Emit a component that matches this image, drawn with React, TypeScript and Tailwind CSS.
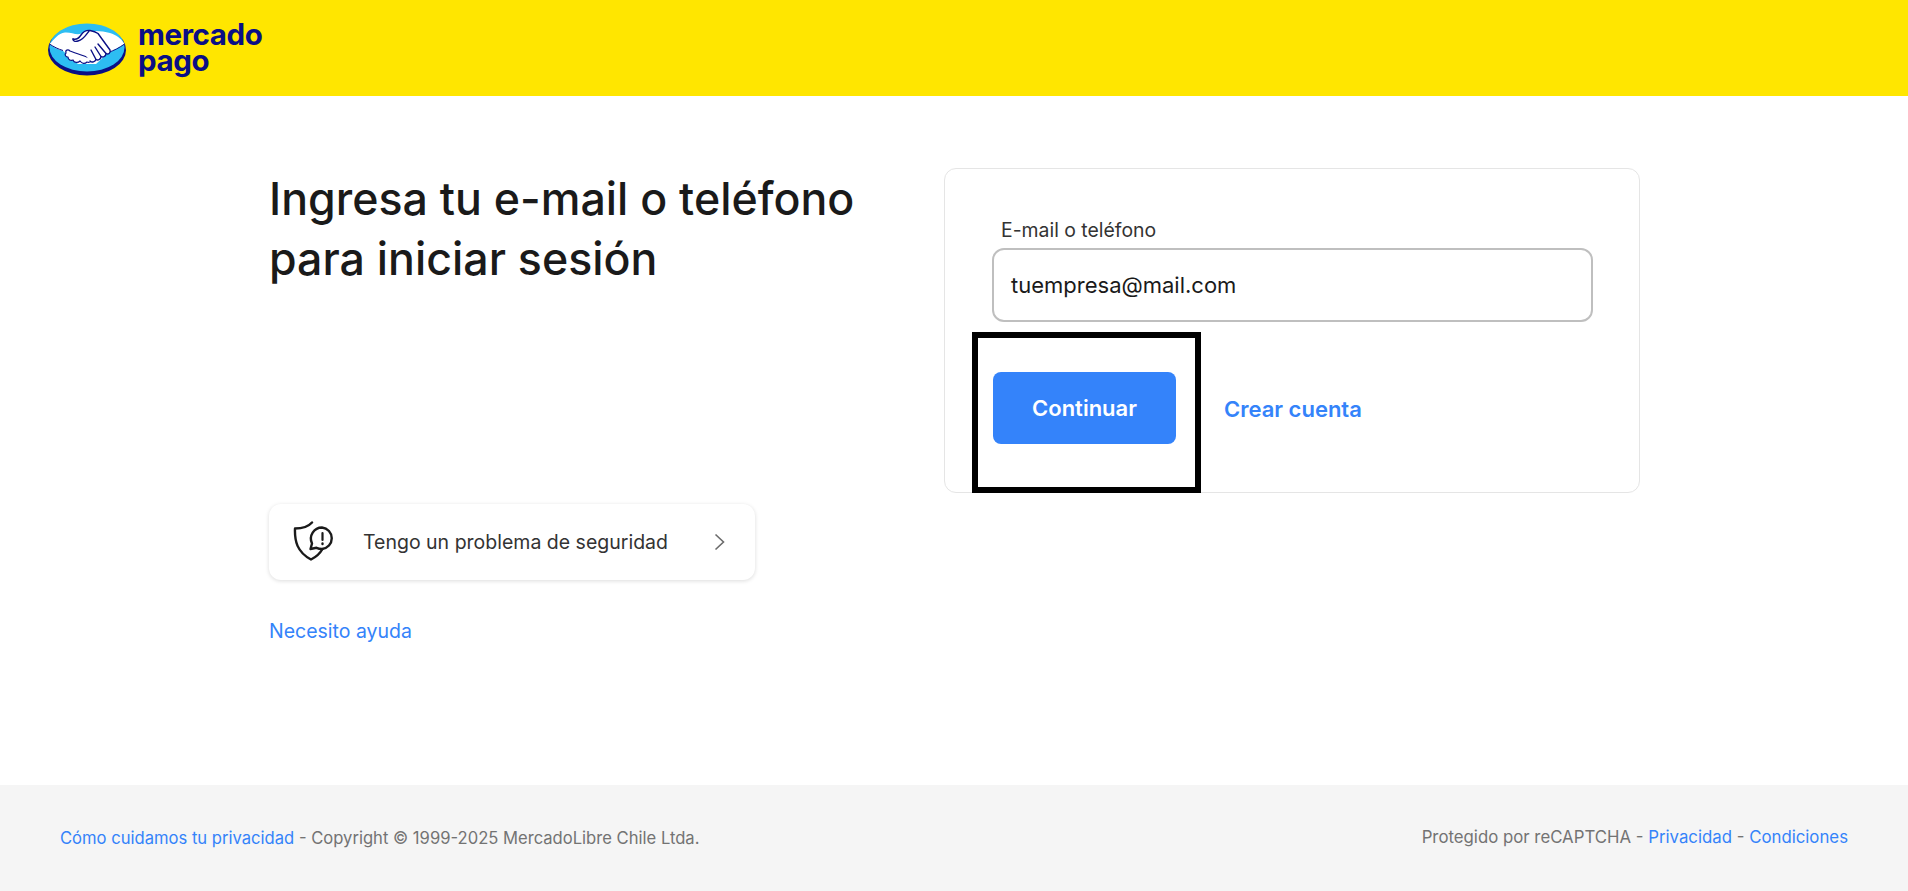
const Logo = () => (
  <div className="flex items-start">
    <svg width="80" height="54" viewBox="0 0 80 54" className="mt-[22px] ml-[48px] shrink-0">
      <ellipse cx="39" cy="28" rx="39" ry="25.5" fill="#0a0f85" />
      <ellipse cx="39" cy="25.5" rx="37.5" ry="24" fill="#2dbdf2" />
      <path d="M1.5 22C6 18 10 11 17 10.5C24 10 28 14 36 11C44 8 54 9 62 11C68 13 73 16 76.5 22C70 26 65 29 60 31L48 42L30 42L15 29C9 27 5 25 1.5 22Z" fill="#fff" />
      <path d="M1.5 22C6 25 10 27 15 28.5M76.5 22C71 26 66 28.5 60 30.5" fill="none" stroke="#0a0f85" strokeWidth="1" />
      <path d="M22 29C20 27 17 28 18 31C16 33 18 35 20 35C20 38 23 39 25 38C26 41 30 41 32 39C34 42 37 42 39 40C42 41 44 39 44 37C39 35 30 32 22 29Z" fill="#fff" stroke="#0a0f85" strokeWidth="1.2" strokeLinejoin="round" />
      <path d="M25 17C28 18 31 16 33 13C35 10 38 8 42 8.5C45 9 48 10 50 11.5L62 28C63 31 60 33 58 31.5C58 34 55 36 53 34.5C53 37 50 39 48 37.5C47 40 44 41 42 39"
        fill="#fff" stroke="#0a0f85" strokeWidth="1.4" strokeLinejoin="round" strokeLinecap="round" />
      <path d="M41 9C38 13 35 18 30 19C27 20 25 19 25 17M50 22L58 31.5M47 25L53 34.5M43 28L48 37.5" fill="none" stroke="#0a0f85" strokeWidth="1.4" strokeLinecap="round" />
    </svg>
    <div className="ml-[10px] mt-[21px] font-['Inter',sans-serif] text-[29.5px] font-bold leading-[26px] tracking-[-0.4px] text-[#0a0f85]">
      <div>mercado</div>
      <div>pago</div>
    </div>
  </div>
);

const ShieldIcon = () => (
  <svg width="42" height="40" viewBox="0 0 42 40" fill="none" stroke="#1a1a1a" strokeWidth="2.4" strokeLinejoin="round" strokeLinecap="round" className="mt-[-2px] shrink-0">
    <path d="M19 1.5C15 6 8 7.5 2 7.5C1.5 20 4 31 18 38.5C23 36 27 32.5 29.5 28" />
    <path d="M29 6.5A10.8 10.8 0 0 1 29 28C27 28 25 27.5 23.5 26.8L17.5 28L19 22.5C15.5 15 21 6.5 29 6.5Z" fill="#fff" />
    <path d="M29.5 12V19" strokeWidth="2.2" />
    <path d="M29.5 22.5V23" strokeWidth="2.4" />
  </svg>
);

export default function App() {
  return (
    <div className="flex h-[891px] flex-col bg-white font-['Inter',sans-serif] text-[#1a1a1a]">
      <header className="h-[96px] shrink-0 bg-[#ffe600]">
        <Logo />
      </header>
      <main className="flex flex-1 items-start pl-[269px] pt-[72px]">
        <div className="w-[675px] shrink-0">
          <h1 className="mt-[1px] text-[44.7px] font-medium leading-[60px]">
            Ingresa tu e-mail o teléfono<br />para iniciar sesión
          </h1>
          <a className="mt-[215px] flex h-[76px] w-[486px] items-center rounded-xl bg-white pl-[24px] shadow-[0_1px_4px_rgba(0,0,0,0.14)]">
            <ShieldIcon />
            <span className="ml-[28px] mt-[2px] w-[351px] text-[19.5px] text-[#333]">Tengo un problema de seguridad</span>
            <svg width="12" height="18" viewBox="0 0 12 18" fill="none" stroke="#6b6b6b" strokeWidth="1.6" className="shrink-0">
              <path d="M1.5 1.5L9.5 9L1.5 16.5" />
            </svg>
          </a>
          <a className="mt-[37px] block text-[19.5px] leading-[28px] text-[#3483fa]">Necesito ayuda</a>
        </div>
        <section className="box-border h-[325px] w-[696px] rounded-xl border border-[#e5e5e5] pl-[47px] pr-[46px] pt-[46px]">
          <label className="ml-[9px] block text-[19.4px] leading-[30px] text-[#333]">E-mail o teléfono</label>
          <div className="mt-[3px] flex h-[74px] items-center rounded-xl border-2 border-[#bfbfbf] pl-[17px] text-[22px]">
            tuempresa@mail.com
          </div>
          <div className="ml-[-20px] mt-[10px] flex items-center">
            <div className="box-border h-[161px] w-[229px] border-[6px] border-black pl-[15px] pt-[34px]">
              <button className="h-[72px] w-[183px] rounded-lg bg-[#3483fa] text-[22px] font-semibold text-white">Continuar</button>
            </div>
            <a className="ml-[23px] mt-[-7px] text-[22px] font-semibold text-[#3483fa]">Crear cuenta</a>
          </div>
        </section>
      </main>
      <footer className="flex h-[106px] shrink-0 items-center justify-between bg-[#f5f5f5] pl-[60px] pr-[60px] text-[#737373]">
        <div className="text-[16.6px]">
          <a className="text-[#3483fa]">Cómo cuidamos tu privacidad</a> - Copyright © 1999-2025 MercadoLibre Chile Ltda.
        </div>
        <div className="text-[16.8px]">
          Protegido por reCAPTCHA - <a className="text-[#3483fa]">Privacidad</a> - <a className="text-[#3483fa]">Condiciones</a>
        </div>
      </footer>
    </div>
  );
}
